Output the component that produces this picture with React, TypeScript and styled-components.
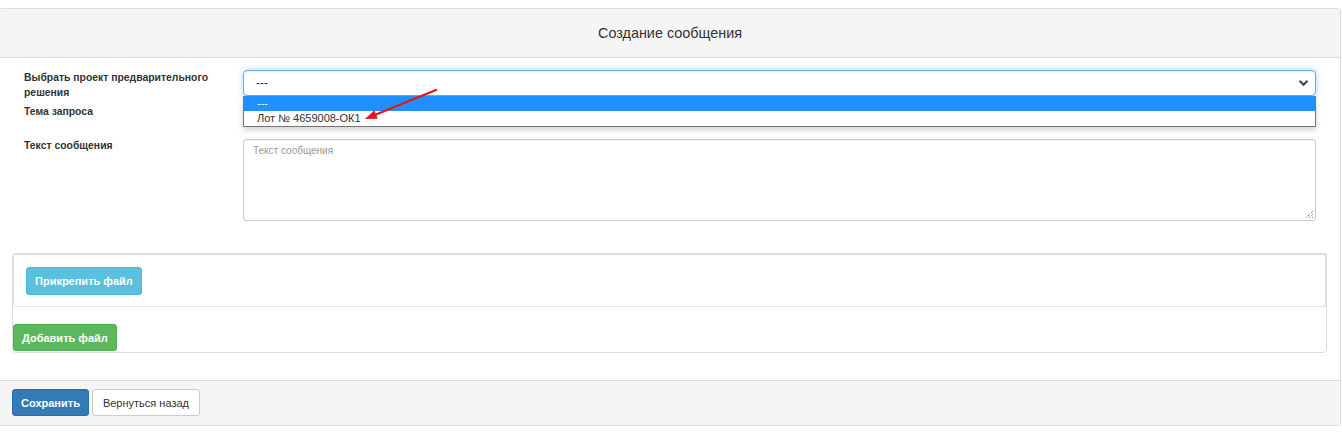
import React from "react";
import styled, { createGlobalStyle } from "styled-components";

const Global = createGlobalStyle`
  html, body { margin: 0; padding: 0; background: #fff; }
  body { font-family: "Liberation Sans", Arial, sans-serif; color: #333; overflow: hidden; }
  * { box-sizing: border-box; }
`;

const Panel = styled.div`
  margin: 8px 0 0 -1px;
  width: 1342px;
  border: 1px solid #ddd;
  border-radius: 3px;
  background: #fff;
`;

const Header = styled.div`
  height: 49px;
  background: #f5f5f5;
  border-bottom: 1px solid #ddd;
  display: flex;
  align-items: center;
  justify-content: center;
  font-size: 14.4px;
  color: #333;
`;

const Body = styled.div`
  padding: 12px 24px 27px 24px;
`;

const Row = styled.div<{ $gap?: number }>`
  display: grid;
  grid-template-columns: 219px 1fr;
  align-items: start;
  margin-bottom: ${(p) => p.$gap ?? 5}px;
`;

const Label = styled.label<{ $shift?: number }>`
  font-size: 10.4px;
  font-weight: bold;
  line-height: 15px;
  color: #333;
  margin-top: ${(p) => p.$shift ?? 0}px;
`;

const SelectWrap = styled.div`
  position: relative;
`;

const SelectBox = styled.div`
  height: 26px;
  border: 1px solid #66afe9;
  border-radius: 4px;
  box-shadow: inset 0 1px 1px rgba(0, 0, 0, 0.075), 0 0 6px rgba(102, 175, 233, 0.55);
  display: flex;
  align-items: center;
  justify-content: space-between;
  padding: 0 6px 0 12px;
  font-size: 12px;
  color: #333;
  background: #fff;
`;

const Options = styled.div`
  position: absolute;
  top: 26px;
  left: 0;
  right: 0;
  border: 1px solid #767676;
  border-top: none;
  background: #fff;
  box-shadow: 0 3px 6px rgba(0, 0, 0, 0.18);
  z-index: 5;
`;

const Option = styled.div<{ $active?: boolean }>`
  height: 15px;
  line-height: 15px;
  font-size: 11px;
  padding-left: 13px;
  background: ${(p) => (p.$active ? "#1e90ff" : "#fff")};
  color: ${(p) => (p.$active ? "#fff" : "#333")};
`;

const Arrow = styled.svg`
  position: absolute;
  left: 0;
  top: 0;
  z-index: 6;
  overflow: visible;
`;

const Spacer = styled.div`
  height: 30px;
`;

const TextArea = styled.div`
  position: relative;
  height: 82px;
  border: 1px solid #ccc;
  border-radius: 3px;
  padding: 5px 9px;
  font-size: 10px;
  color: #999;
  box-shadow: inset 0 1px 1px rgba(0, 0, 0, 0.075);
`;

const Grip = styled.svg`
  position: absolute;
  right: 1px;
  bottom: 1px;
`;

const FilePanel = styled.div`
  margin: 32px -11px 0 -12px;
  border: 1px solid #ddd;
  border-radius: 4px;
  padding-bottom: 1px;
`;

const FileBox = styled.div`
  border: 1px solid #ddd;
  border-top-width: 2px;
  border-right-width: 2px;
  border-radius: 3px;
  height: 54px;
  padding: 12px 12px;
  margin: -1px -1px 17px 0;
`;

const Btn = styled.button<{ $variant: "info" | "success" | "primary" | "default" }>`
  font-family: "Liberation Sans", Arial, sans-serif;
  font-size: 11px;
  font-weight: ${(p) => (p.$variant === "default" ? "normal" : "bold")};
  height: ${(p) => (p.$variant === "info" ? 28 : 27)}px;
  padding: 0 ${(p) => (p.$variant === "default" ? 10 : 8)}px;
  border-radius: 3px;
  border: 1px solid
    ${(p) =>
      p.$variant === "info"
        ? "#46b8da"
        : p.$variant === "success"
        ? "#4cae4c"
        : p.$variant === "primary"
        ? "#2e6da4"
        : "#ccc"};
  background: ${(p) =>
    p.$variant === "info"
      ? "#5bc0de"
      : p.$variant === "success"
      ? "#5cb85c"
      : p.$variant === "primary"
      ? "#337ab7"
      : "#fff"};
  color: ${(p) => (p.$variant === "default" ? "#333" : "#fff")};
  cursor: pointer;
`;

const Footer = styled.div`
  height: 45px;
  background: #f5f5f5;
  border-top: 1px solid #ddd;
  display: flex;
  align-items: center;
  gap: 3px;
  padding: 0 0 1px 12px;
`;

export default function App() {
  return (
    <>
      <Global />
      <Panel>
        <Header>Создание сообщения</Header>
        <Body>
          <Row $gap={4}>
            <Label>
              Выбрать проект предварительного
              <br />
              решения
            </Label>
            <SelectWrap>
              <SelectBox>
                <span>---</span>
                <svg width="11" height="8" viewBox="0 0 11 8">
                  <path d="M1.5 1.8 L5.5 5.8 L9.5 1.8" fill="none" stroke="#444" strokeWidth="2" />
                </svg>
              </SelectBox>
              <Options>
                <Option $active>---</Option>
                <Option>Лот № 4659008-ОК1</Option>
              </Options>
              <Arrow width="200" height="60" viewBox="0 0 200 60">
                <line x1="193" y1="20" x2="133" y2="44.5" stroke="#e8141b" strokeWidth="2.4" strokeLinecap="round" />
                <polygon points="122,49 134.8,48.7 131.4,40.3" fill="#e8141b" />
              </Arrow>
            </SelectWrap>
          </Row>
          <Row $gap={5}>
            <Label>Тема запроса</Label>
            <Spacer />
          </Row>
          <Row $gap={0}>
            <Label $shift={-1}>Текст сообщения</Label>
            <TextArea>
              Текст сообщения
              <Grip width="10" height="10" viewBox="0 0 10 10">
                <path d="M9 2 L2 9 M9 5 L5 9 M9 8 L8 9" stroke="#666" strokeWidth="1" strokeDasharray="1 1" />
              </Grip>
            </TextArea>
          </Row>
          <FilePanel>
            <FileBox>
              <Btn $variant="info">Прикрепить файл</Btn>
            </FileBox>
            <Btn $variant="success">Добавить файл</Btn>
          </FilePanel>
        </Body>
        <Footer>
          <Btn $variant="primary">Сохранить</Btn>
          <Btn $variant="default">Вернуться назад</Btn>
        </Footer>
      </Panel>
    </>
  );
}
